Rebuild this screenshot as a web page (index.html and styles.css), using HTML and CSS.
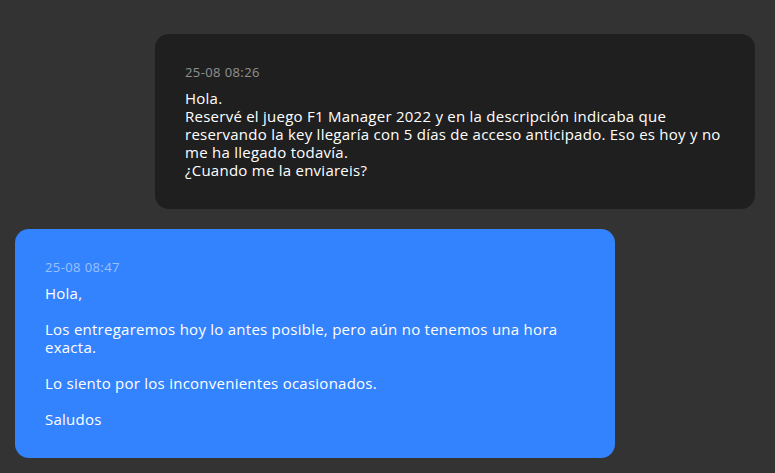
FILE: index.html
```html
<!DOCTYPE html>
<html lang="es">
<head>
  <meta charset="UTF-8">
  <title>Mensajes</title>
  <link rel="stylesheet" href="styles.css">
</head>
<body>

  <div class="chat">
    <div class="msg msg-user">
      <div class="msg-date">25-08 08:26</div>
      <div class="msg-text">Hola.
Reservé el juego F1 Manager 2022 y en la descripción indicaba que reservando la key llegaría con 5 días de acceso anticipado. Eso es hoy y no me ha llegado todavía.
¿Cuando me la enviareis?</div>
    </div>

    <div class="msg msg-staff">
      <div class="msg-date">25-08 08:47</div>
      <div class="msg-text">Hola,

Los entregaremos hoy lo antes posible, pero aún no tenemos una hora exacta.

Lo siento por los inconvenientes ocasionados.

Saludos</div>
    </div>
  </div>

</body>
</html>
```

FILE: styles.css
```css
* {
  margin: 0;
  padding: 0;
  box-sizing: border-box;
}

body, html {
  height: 100%;
  background-color: #333333;
  font-family: 'Open Sans', sans-serif;
  color: #ffffff;
  overflow: hidden;
}

.chat {
  display: flex;
  flex-direction: column;
  gap: 20px;
  padding: 34px 20px 0 15px;
}

.msg {
  width: 600px;
  padding: 30px;
  border-radius: 14px;
}

.msg-user {
  align-self: flex-end;
  background-color: #1f1f1f;
}

.msg-staff {
  align-self: flex-start;
  background-color: #3483fe;
}

.msg-date {
  font-size: 13px;
  line-height: 16px;
  letter-spacing: 0.4px;
  color: rgba(255,255,255,0.5);
  margin-bottom: 9px;
}

.msg-text {
  font-size: 15px;
  line-height: 18px;
  letter-spacing: 0.25px;
  white-space: pre-line;
}
```
